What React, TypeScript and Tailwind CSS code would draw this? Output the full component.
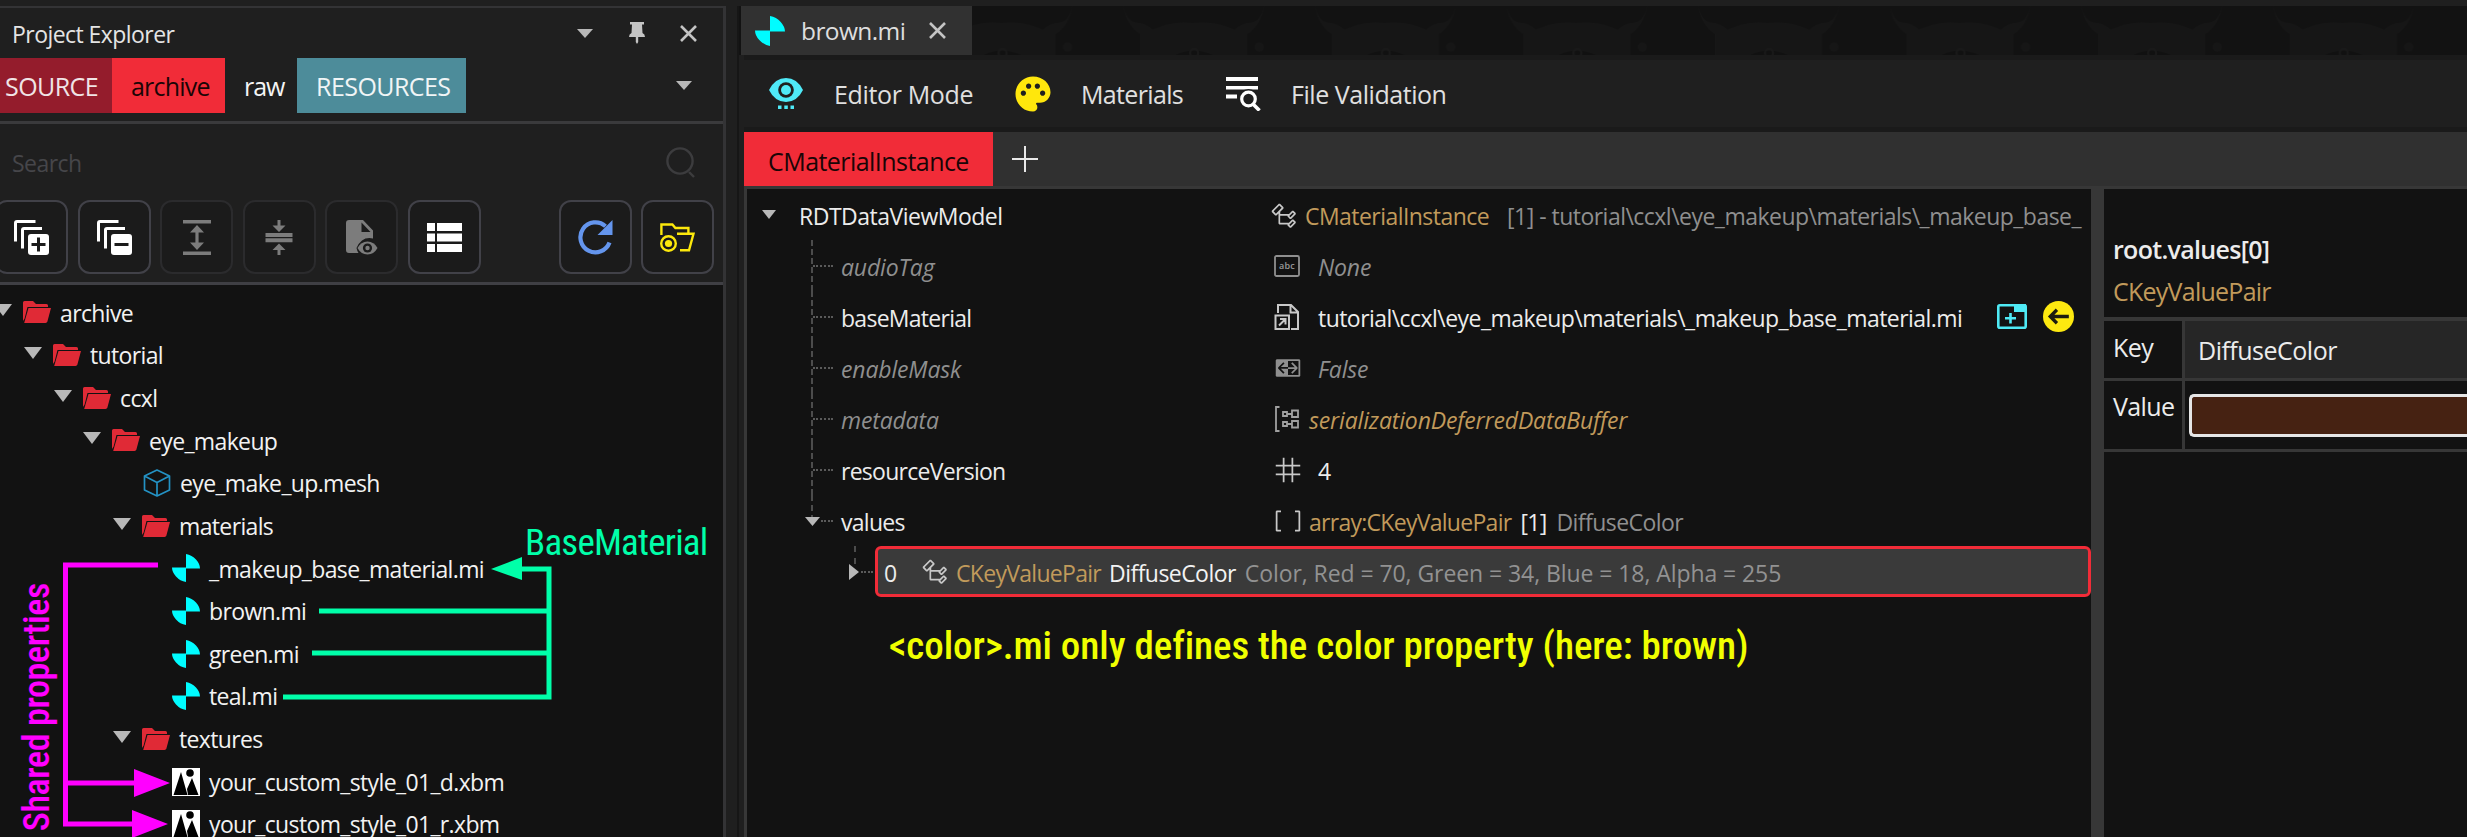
import type { ReactNode } from "react";
import {
  VscSymbolClass,
  VscSymbolBoolean,
  VscSymbolNumeric,
  VscSymbolArray,
} from "react-icons/vsc";
import { MdPalette } from "react-icons/md";

function Triangle({ className }: { className: string }) {
  return (
    <svg viewBox="0 0 18 12" preserveAspectRatio="none" className={className}>
      <path d="M0 0h18L9 12z" fill="#b8b8b8" />
    </svg>
  );
}

function Close({ className }: { className: string }) {
  return (
    <svg viewBox="0 0 17 17" className={className} fill="none" stroke="#c4c4c4" strokeWidth="2.6">
      <path d="M1 1l15 15M16 1L1 16" />
    </svg>
  );
}

function FolderIcon() {
  return (
    <svg viewBox="0 0 28 22" className="h-[22px] w-7 shrink-0" fill="#e02a36">
      <path d="M1.5 0H10l3 3h10.5q1.5 0 1.5 1.5V6H4.5L1.6 17.5 0 20V1.5Q0 0 1.5 0z" />
      <path d="M5.5 7H28l-3.6 13.6Q24 22 22.6 22H1.2z" />
    </svg>
  );
}

function MeshIcon() {
  return (
    <svg viewBox="0 0 28 28" className="size-7 shrink-0" fill="none" stroke="#2492c4" strokeWidth="1.7" strokeLinejoin="round">
      <path d="M14 1l12.5 6v14L14 27 1.5 21V7zM1.5 7L14 13.5 26.5 7M14 13.5V27" />
    </svg>
  );
}

function MaterialIcon({ className = "size-7" }: { className?: string }) {
  return (
    <svg viewBox="0 0 28 28" className={`${className} shrink-0`} fill="#00fcff">
      <path d="M14 0q6 1 10 5.5T28 14.5H14zM14 28q-6-1-10-5.5T0 13.5h14z" />
    </svg>
  );
}

function TextureIcon() {
  return (
    <svg viewBox="0 0 28 28" className="size-7 shrink-0">
      <path d="M0 0h28v28H0z" fill="#fff" />
      <circle cx="18" cy="5" r="3.8" />
      <path d="M1.5 27L9 4l6.5 23zM16 27l-1-6 5-11 6.5 17z" />
    </svg>
  );
}

type Kind = "folder" | "mesh" | "material" | "texture";

const TREE: { label: string; kind: Kind; pad: string }[] = [
  { label: "archive", kind: "folder", pad: "pl-0 -ml-[6px]" },
  { label: "tutorial", kind: "folder", pad: "pl-6" },
  { label: "ccxl", kind: "folder", pad: "pl-[54px]" },
  { label: "eye_makeup", kind: "folder", pad: "pl-[83px]" },
  { label: "eye_make_up.mesh", kind: "mesh", pad: "pl-[143px]" },
  { label: "materials", kind: "folder", pad: "pl-[113px]" },
  { label: "_makeup_base_material.mi", kind: "material", pad: "pl-[172px]" },
  { label: "brown.mi", kind: "material", pad: "pl-[172px]" },
  { label: "green.mi", kind: "material", pad: "pl-[172px]" },
  { label: "teal.mi", kind: "material", pad: "pl-[172px]" },
  { label: "textures", kind: "folder", pad: "pl-[113px]" },
  { label: "your_custom_style_01_d.xbm", kind: "texture", pad: "pl-[172px]" },
  { label: "your_custom_style_01_r.xbm", kind: "texture", pad: "pl-[172px]" },
];

function TreeRow({ label, kind, pad }: { label: string; kind: Kind; pad: string }) {
  return (
    <div className={`flex h-[42.667px] shrink-0 items-center text-[#f2f2f2] ${pad}`}>
      {kind === "folder" && <Triangle className="mr-[11px] -mt-1 h-3 w-[18px] shrink-0" />}
      {kind === "folder" && <FolderIcon />}
      {kind === "mesh" && <MeshIcon />}
      {kind === "material" && <MaterialIcon />}
      {kind === "texture" && <TextureIcon />}
      <span className="mt-px ml-[9px] tracking-[-0.64px]">{label}</span>
    </div>
  );
}

function ToolButton({ children, dim, className = "" }: { children: ReactNode; dim?: boolean; className?: string }) {
  return (
    <div
      className={`flex h-[74px] w-[73px] shrink-0 items-center justify-center rounded-[12px] border-2 bg-[#1b1b1b] ${
        dim ? "border-[#2b2b2d]" : "border-[#414148]"
      } ${className}`}
    >
      {children}
    </div>
  );
}

function StackIcon({ plus }: { plus?: boolean }) {
  return (
    <svg viewBox="0 0 35 35" className="size-[35px]" fill="none" stroke="#fff" strokeWidth="3">
      <path d="M21.5 1.5H3Q1.5 1.5 1.5 3v18.500M28 8.500H10Q8.500 8.500 8.500 10v18.500" />
      <rect x="14" y="14" width="21" height="21" rx="3" fill="#fff" stroke="none" />
      <path d={plus ? "M17.5 24.5h14M24.5 17.5v14" : "M17.5 24.5h14"} stroke="#1b1b1b" />
    </svg>
  );
}

function ExpandIcon() {
  return (
    <svg viewBox="0 0 28 35" className="h-[35px] w-7" fill="#7c7c7c">
      <path d="M0 0h28v3.500H0zM0 31.500h28V35H0zM12.400 10h3.200v15h-3.200z" />
      <path d="M14 5l7 7.500H7zM14 30l7-7.500H7z" />
    </svg>
  );
}

function CollapseIcon() {
  return (
    <svg viewBox="0 0 28 35" className="h-[35px] w-7" fill="#7c7c7c">
      <path d="M.5 13h27v4H.5zM.5 18.200h27v4H.5zM12.500 0h3v7h-3zM12.500 28h3v7h-3z" />
      <path d="M14 12l6.500-6.500h-13zM14 23.500l6.500 6.500h-13z" />
    </svg>
  );
}

function FileEyeIcon() {
  return (
    <svg viewBox="0 0 32 35" className="h-[35px] w-8" fill="#7c7c7c">
      <path d="M3 0h14l10 10.500v8Q16 16 10.500 28q.5 2.500 2 5H3q-3 0-3-3V3Q0 0 3 0zM15.500 2.500V12h9z" fillRule="evenodd" />
      <path d="M11.500 28Q15 21.500 21.500 21.500T31.500 28q-3.500 6.500-10 6.500T11.500 28z" />
      <circle cx="21.500" cy="28" r="4.600" fill="#1b1b1b" />
      <circle cx="21.500" cy="28" r="2.200" />
    </svg>
  );
}

function ListIcon() {
  return (
    <svg viewBox="0 0 35 29" className="h-[29px] w-[35px]" fill="#fff">
      <path d="M0 0h8v8H0zM10 0h25v8H10zM0 10.500h8v8H0zM10 10.500h25v8H10zM0 21h8v8H0zM10 21h25v8H10z" />
    </svg>
  );
}

function RefreshIcon() {
  return (
    <svg viewBox="0 0 35 35" className="size-[35px]">
      <path d="M31.500 22.500A15 15 0 1 1 27.500 6.200" fill="none" stroke="#6495ed" strokeWidth="4.200" />
      <path d="M34.500 0v15h-15z" fill="#6495ed" />
    </svg>
  );
}

function OpenFolderIcon() {
  return (
    <svg viewBox="0 0 35 29" className="h-[29px] w-[35px]" fill="none" stroke="#fce80c" strokeWidth="2.400">
      <path d="M1.400 12V1.500h11l3 3.500h13v5M17 10.800h16.500l-4.500 16.500h-9" />
      <circle cx="8.500" cy="20.500" r="7.300" />
      <circle cx="8.500" cy="20.500" r="3.600" fill="#fce80c" stroke="none" />
    </svg>
  );
}

function Explorer() {
  return (
    <div className="flex w-[726px] shrink-0 flex-col overflow-hidden border-t-2 border-r-[3px] border-[#333335] bg-[#1f1f1f] text-[23px] tracking-[-0.55px] text-[#e4e4e4]">
      <div className="flex h-[50px] shrink-0 items-center pr-[26px] pl-3">
        <span className="mt-[3px] flex-1">Project Explorer</span>
        <Triangle className="mr-[36px] h-[9px] w-4" />
        <svg viewBox="0 0 16 22" className="mr-[35px] h-[22px] w-4" fill="#c4c4c4">
          <path d="M1 0h14v2.500h-2L13.500 11q2.500 1 2.500 4H9.200v5L8 22l-1.200-2v-5H0q0-3 2.500-4L3 2.500H1z" />
        </svg>
        <Close className="size-[17px]" />
      </div>
      <div className="flex h-[55px] shrink-0 items-stretch text-[25px] leading-[56px]">
        <div className="w-28 bg-[#941c2c] pl-[5px] text-[#f0e4e6]">SOURCE</div>
        <div className="w-[113px] bg-[#f12c38] pl-[19px] tracking-[-0.8px] text-[#1a0506]">archive</div>
        <div className="w-[72px] pl-[19px] tracking-[-1px] text-[#f4f4f4]">raw</div>
        <div className="w-[169px] bg-[#4d8c9a] pl-[19px] text-[#f0f5f6]">RESOURCES</div>
        <div className="flex flex-1 items-center justify-end pr-[31px]">
          <Triangle className="h-[9px] w-4" />
        </div>
      </div>
      <div className="mt-2 h-[3px] shrink-0 bg-[#3a3a3c]" />
      <div className="flex h-[76px] shrink-0 items-center justify-between pr-[27px] pl-3 text-[#46464a]">
        <span className="mt-0.5">Search</span>
        <svg viewBox="0 0 31 31" className="size-[31px]" fill="none" stroke="#3c3c3e" strokeWidth="2.400">
          <circle cx="15" cy="14" r="12.600" />
          <path d="M24 25l5 5" />
        </svg>
      </div>
      <div className="-ml-[5px] flex h-[74px] shrink-0 gap-[9.5px]">
        <ToolButton><StackIcon plus /></ToolButton>
        <ToolButton><StackIcon /></ToolButton>
        <ToolButton dim><ExpandIcon /></ToolButton>
        <ToolButton dim><CollapseIcon /></ToolButton>
        <ToolButton dim><FileEyeIcon /></ToolButton>
        <ToolButton><ListIcon /></ToolButton>
        <ToolButton className="ml-auto"><RefreshIcon /></ToolButton>
        <ToolButton className="mr-[9px]"><OpenFolderIcon /></ToolButton>
      </div>
      <div className="mt-[8px] h-[3px] shrink-0 bg-[#3f3f44]" />
      <div className="flex min-h-0 flex-1 flex-col overflow-hidden bg-[#121212] pt-[6px]">
        {TREE.map((r) => (
          <TreeRow key={r.label} {...r} />
        ))}
      </div>
    </div>
  );
}

function TextIcon() {
  return (
    <svg viewBox="0 0 26 22" className="h-[22px] w-[26px]">
      <rect x="1" y="1" width="24" height="20" rx="1.500" fill="none" stroke="#8f8f8f" strokeWidth="1.800" />
      <text x="13" y="13.500" textAnchor="middle" fill="#9a9a9a" fontSize="9" fontWeight="600" letterSpacing="0.3" fontStyle="normal">abc</text>
    </svg>
  );
}

function FileLinkIcon() {
  return (
    <svg viewBox="0 0 26 28" className="h-7 w-[26px]" fill="none" stroke="#c8c8c8" strokeWidth="2">
      <path d="M4 10V2h13l7 7v17h-7M16.500 2v7.500H24M1.500 12.500h13.500V26H1.500zM5 22.500l6-6M6 16h5.500v5.500" />
    </svg>
  );
}

function BufferIcon() {
  return (
    <svg viewBox="0 0 26 26" className="size-[26px]" fill="none" stroke="#a0a0a0" strokeWidth="1.800">
      <path d="M5.500 1H2v24h3.500M9 6h4v4H9zM18 4.500h6v6.500h-6zM13 8h5M9 16h4v4H9zM18 15h6v6.500h-6zM13 18h5" />
    </svg>
  );
}

const GOLD = "text-[#c19a5b]";

function Branch({ open }: { open?: boolean }) {
  return (
    <div className="flex h-full w-[94px] shrink-0 pl-16">
      <div className={`relative flex ${open ? "h-1/2" : "h-full"} w-[22px] border-l-2 border-dashed border-[#4c4c4c]`}>
        {open && <Triangle className="absolute -bottom-[5px] -left-2 h-[9px] w-[15px]" />}
        <div className={`${open ? "mt-[25px] ml-2" : "mt-[25px]"} h-0 flex-1 border-t-2 border-dotted border-[#5a5a5a]`} />
      </div>
    </div>
  );
}

function Prop({ name, dim, open, icon, children }: { name: string; dim?: boolean; open?: boolean; icon: ReactNode; children: ReactNode }) {
  return (
    <div className={`flex h-[51px] shrink-0 items-center ${dim ? "tracking-[-0.15px] text-[#8f8f8f] italic" : "tracking-[-0.72px] text-[#ececec]"}`}>
      <Branch open={open} />
      <span className="mt-[3px] w-[433px]">{name}</span>
      <span className="flex w-7 shrink-0">{icon}</span>
      {children}
    </div>
  );
}

function PropertyTree() {
  return (
    <div className="flex w-[1344px] shrink-0 flex-col text-[23px] tracking-[-0.55px] whitespace-pre">
      <div className="flex h-[51px] shrink-0 items-center overflow-hidden pt-[3px] text-[#ececec]">
        <Triangle className="-mt-[3px] ml-[15px] h-[9px] w-[14px]" />
        <span className="ml-[23px] w-[471px] tracking-[-0.5px]">RDTDataViewModel</span>
        <VscSymbolClass className="-mt-px size-7 text-[#c8c8c8]" />
        <span className={`ml-[7px] ${GOLD}`}>CMaterialInstance</span>
        <span className="ml-[18px] tracking-[-0.52px] text-[#8f8f8f]">{"[1] - tutorial\\ccxl\\eye_makeup\\materials\\_makeup_base_"}</span>
      </div>
      <Prop name="audioTag" dim icon={<TextIcon />}>
        <span className="mt-[3px] ml-4">None</span>
      </Prop>
      <Prop name="baseMaterial" icon={<FileLinkIcon />}>
        <span className="mt-[3px] ml-4 w-[679px] tracking-[-0.55px]">{"tutorial\\ccxl\\eye_makeup\\materials\\_makeup_base_material.mi"}</span>
        <svg viewBox="0 0 30 25" className="h-[25px] w-[30px]" fill="none" stroke="#4feaf5" strokeWidth="2.600">
          <rect x="1.300" y="1.300" width="27.400" height="22.400" rx="1.500" />
          <path d="M17 0h12v8H17z" fill="#4feaf5" stroke="none" />
          <path d="M13.500 9v10.500M8 14.300h11" />
        </svg>
        <svg viewBox="0 0 30 30" className="ml-4 size-[31px]">
          <circle cx="15" cy="15" r="15" fill="#fde910" />
          <path d="M25 15H7.500M13.500 8.500L7 15l6.500 6.500" fill="none" stroke="#1c1c10" strokeWidth="3.200" />
        </svg>
      </Prop>
      <Prop name="enableMask" dim icon={<VscSymbolBoolean className="size-7" />}>
        <span className="mt-[3px] ml-4">False</span>
      </Prop>
      <Prop name="metadata" dim icon={<BufferIcon />}>
        <span className={`mt-[3px] ml-[7px] ${GOLD}`}>serializationDeferredDataBuffer</span>
      </Prop>
      <Prop name="resourceVersion" icon={<VscSymbolNumeric className="size-7 text-[#c8c8c8]" />}>
        <span className="mt-[3px] ml-4">4</span>
      </Prop>
      <Prop name="values" open icon={<VscSymbolArray className="size-7 text-[#c8c8c8]" />}>
        <span className={`mt-[3px] ml-[7px] ${GOLD}`}>array:CKeyValuePair</span>
        <span className="mt-[3px] ml-[9px]">[1]</span>
        <span className="mt-[3px] ml-[10px] tracking-[-0.55px] text-[#8f8f8f]">DiffuseColor</span>
      </Prop>
      <div className="flex h-[51px] shrink-0 items-center pl-[102px]">
        <div className="relative h-full w-[26px] shrink-0">
          <div className="ml-[5px] h-[18px] w-0 border-l-2 border-dashed border-[#4c4c4c]" />
          <svg viewBox="0 0 10 16" className="h-4 w-[10px]"><path d="M0 0l10 8-10 8z" fill="#b8b8b8" /></svg>
          <div className="absolute top-[25px] left-3 w-3 border-t-2 border-dotted border-[#5a5a5a]" />
        </div>
        <div className="flex h-[51px] flex-1 items-center rounded-[6px] border-[3px] border-[#f12c38] bg-[#3a3a3a] pl-[6px]">
          <span className="mt-[3px] w-[37px] text-[#ececec]">0</span>
          <VscSymbolClass className="size-7 text-[#c8c8c8]" />
          <span className={`mt-[3px] ml-[7px] tracking-[-0.7px] ${GOLD}`}>CKeyValuePair</span>
          <span className="mt-[3px] ml-2 text-[#f2f2f2]">DiffuseColor</span>
          <span className="mt-[3px] ml-[9px] tracking-[-0.07px] text-[#929292]">Color, Red = 70, Green = 34, Blue = 18, Alpha = 255</span>
        </div>
      </div>
      <div className="mt-[25px] ml-[142px] self-start font-['Roboto_Condensed','Roboto',sans-serif] text-[39px] leading-[48px] font-medium tracking-[-0.05px] text-[#f0ff00]">
        &lt;color&gt;.mi only defines the color property (here: brown)
      </div>
    </div>
  );
}

function Details() {
  return (
    <div className="flex flex-1 flex-col border-l-[13px] border-[#373737] text-[25px] tracking-[-0.6px] text-[#ececec]">
      <div className="h-[128px] shrink-0 pt-[43px] pl-[9px]">
        <div className="leading-[35px] font-semibold tracking-[-0.7px]">root.values[0]</div>
        <div className={`mt-[7px] leading-[35px] tracking-[-0.75px] ${GOLD}`}>CKeyValuePair</div>
      </div>
      <div className="h-1 shrink-0 bg-[#373737]" />
      <div className="flex h-[57px] shrink-0">
        <div className="w-[81px] border-r-[3px] border-[#373737] pt-[9px] pl-[9px] leading-[35px]">Key</div>
        <div className="flex-1 bg-[#262626] pt-[12px] pl-[13px] leading-[35px] tracking-[-0.5px]">DiffuseColor</div>
      </div>
      <div className="h-[3px] shrink-0 bg-[#373737]" />
      <div className="flex h-[68px] shrink-0">
        <div className="w-[81px] border-r-[3px] border-[#373737] pt-[8px] pl-[9px] leading-[35px]">Value</div>
        <div className="flex flex-1 pt-[13px] pl-[4px]">
          <div className="h-[43px] flex-1 rounded-l-[5px] border-[3px] border-r-0 border-[#e6e6e6] bg-[#462212]" />
        </div>
      </div>
      <div className="h-[3px] shrink-0 bg-[#373737]" />
    </div>
  );
}

function Editor() {
  return (
    <div className="ml-[11px] flex min-w-0 flex-1 flex-col border-l-2 border-[#161616]">
      <div className="relative flex h-[49px] shrink-0 bg-[#121212]">
        <svg className="absolute inset-0 h-full w-full">
          <defs>
            <pattern id="mask" width="191.600" height="49" patternUnits="userSpaceOnUse" x="1">
              <g fill="#161616">
                <path d="M0 0q4 18 17 17 22 6 20 32H17V28Q4 20 0 0zM141 0q-4 18-17 17-22 6-20 32h20V28Q137 20 141 0z" />
                <path d="M22 28q22-14 48-11 28-3 48 11l-8 21H30z" />
                <circle cx="136" cy="41" r="4.500" />
              </g>
              <path d="M52 49q18-9 38 0z" fill="#111" />
              <circle cx="71" cy="47" r="4" fill="none" stroke="#191919" strokeWidth="2" />
            </pattern>
          </defs>
          <rect width="100%" height="100%" fill="url(#mask)" />
        </svg>
        <div className="relative ml-0.5 flex h-full w-[231px] items-center bg-[#313131] pl-[14px] text-[24.5px] tracking-[-0.6px] text-[#dedede]">
          <MaterialIcon className="size-[30px]" />
          <span className="mt-px ml-4 w-[128px]">brown.mi</span>
          <Close className="size-[17px]" />
        </div>
      </div>
      <div className="ml-[5px] flex h-[77px] shrink-0 items-center border-y-[5px] border-[#1a1a1a] bg-[#1f1f1f] text-[25px] tracking-[-0.45px] text-[#e0e0e0]">
        <svg viewBox="0 0 34 31" className="ml-[25px] h-[31px] w-[34px]" fill="#4feaf8">
          <path d="M0 12Q6 0 17 0T34 12Q28 24 17 24T0 12z" />
          <circle cx="17" cy="12" r="7.800" fill="#1f1f1f" />
          <circle cx="17" cy="12" r="5" />
          <path d="M9 27.500h3.500V31H9zM15.300 27.500h3.500V31h-3.500zM21.500 27.500H25V31h-3.500z" />
        </svg>
        <span className="mt-[3px] ml-[31px] w-[178px] tracking-[-0.35px]">Editor Mode</span>
        <MdPalette className="size-[42px] text-[#ffe70c]" />
        <span className="mt-[3px] ml-[27px] w-[145px] tracking-[-0.65px]">Materials</span>
        <svg viewBox="0 0 35 34" className="h-[34px] w-[35px]" fill="#fff">
          <path d="M0 0h32v4H0zM0 9h32v3.500H0zM0 17.500h11v4H0z" />
          <circle cx="22.500" cy="22" r="7" fill="#1f1f1f" stroke="#1f1f1f" strokeWidth="6" />
          <circle cx="22.500" cy="22" r="6.800" fill="#1f1f1f" stroke="#fff" strokeWidth="3.200" />
          <path d="M27 27l6.500 6.500" stroke="#fff" strokeWidth="3.600" />
        </svg>
        <span className="mt-[3px] ml-[30px]">File Validation</span>
      </div>
      <div className="ml-[5px] flex h-[54px] shrink-0 items-center bg-[#303030]">
        <div className="h-full w-[249px] bg-[#f12c38] pt-[1px] pl-6 text-[25px] leading-[56px] tracking-[-0.55px] text-[#1a0506]">
          CMaterialInstance
        </div>
        <svg viewBox="0 0 26 26" className="ml-[19px] size-[26px]" stroke="#e8e8e8" strokeWidth="2">
          <path d="M0 13h26M13 0v26" />
        </svg>
      </div>
      <div className="ml-[5px] flex min-h-0 flex-1 border-t-[3px] border-l-[3px] border-[#373737] bg-[#121212]">
        <PropertyTree />
        <Details />
      </div>
    </div>
  );
}

function Annotations() {
  return (
    <div className="pointer-events-none absolute inset-0 font-['Roboto_Condensed','Roboto',sans-serif] whitespace-nowrap">
      <svg className="absolute inset-0 h-[837px] w-[726px]" fill="none" strokeWidth="5">
        <g stroke="#ff00ff">
          <path d="M158 565H65.500V824H134M65.500 783H136" />
          <path d="M134 769l36 14-36 14zM132 810l36 14-36 14z" fill="#ff00ff" stroke="none" />
        </g>
        <g stroke="#00ffa9">
          <path d="M520 569H549V697H283M319 611H549M312 653H549" />
          <path d="M491 569l31-12v23z" fill="#00ffa9" stroke="none" />
        </g>
      </svg>
      <div className="absolute top-[521px] left-[525px] text-[37px] leading-[44px] font-normal tracking-[-0.8px] text-[#00ffa9]">BaseMaterial</div>
      <div className="absolute top-[583px] left-[15px] rotate-180 text-[36px] leading-[44px] font-medium tracking-[-0.4px] text-[#ff00ff] [writing-mode:vertical-rl]">Shared properties</div>
    </div>
  );
}

export default function App() {
  return (
    <div className="relative flex h-[837px] w-[2467px] overflow-hidden bg-[#1f1f1f] pt-[6px] font-['Open_Sans','Noto_Sans',sans-serif]">
      <Explorer />
      <Editor />
      <Annotations />
    </div>
  );
}
